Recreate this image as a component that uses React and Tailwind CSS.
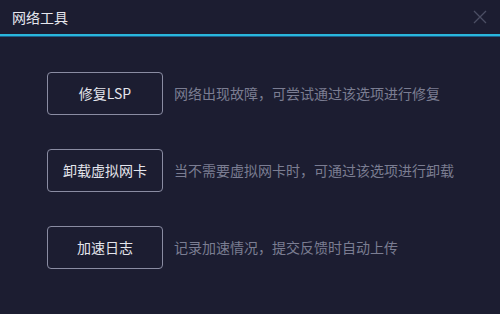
import React from 'react';

const FONT = { fontFamily: '"Noto Sans CJK SC", "Noto Sans", sans-serif' };

const items = [
  { label: '修复LSP', desc: '网络出现故障，可尝试通过该选项进行修复' },
  { label: '卸载虚拟网卡', desc: '当不需要虚拟网卡时，可通过该选项进行卸载' },
  { label: '加速日志', desc: '记录加速情况，提交反馈时自动上传' },
];

export default function App() {
  return (
    <div className="w-[500px] h-[314px] bg-[#1c1d31] overflow-hidden" style={FONT}>
      {/* Title bar */}
      <div className="h-[34px] flex items-center justify-between pl-[12px] pr-[12px]">
        <span className="text-[14px] text-[#e6e7ee] leading-none">网络工具</span>
        <svg width="16" height="16" viewBox="0 0 16 16" className="mr-[0px]">
          <path d="M2 2 L14 14 M14 2 L2 14" stroke="#4b4e63" strokeWidth="1.3" />
        </svg>
      </div>
      <div className="h-[2px] bg-[#29b6dc]" />
      <div className="h-[1px] bg-[#1b5f8a]" />

      {/* Options */}
      <div className="flex flex-col gap-[34px] pl-[47px] pt-[35px]">
        {items.map((it) => (
          <div key={it.label} className="flex items-center">
            <button className="w-[116px] h-[43px] border border-[#8a8ca2] rounded-[4px] text-[14px] text-[#e4e5ec] flex items-center justify-center">
              {it.label}
            </button>
            <span className="ml-[11px] text-[14px] text-[#7b7d92]">{it.desc}</span>
          </div>
        ))}
      </div>
    </div>
  );
}
